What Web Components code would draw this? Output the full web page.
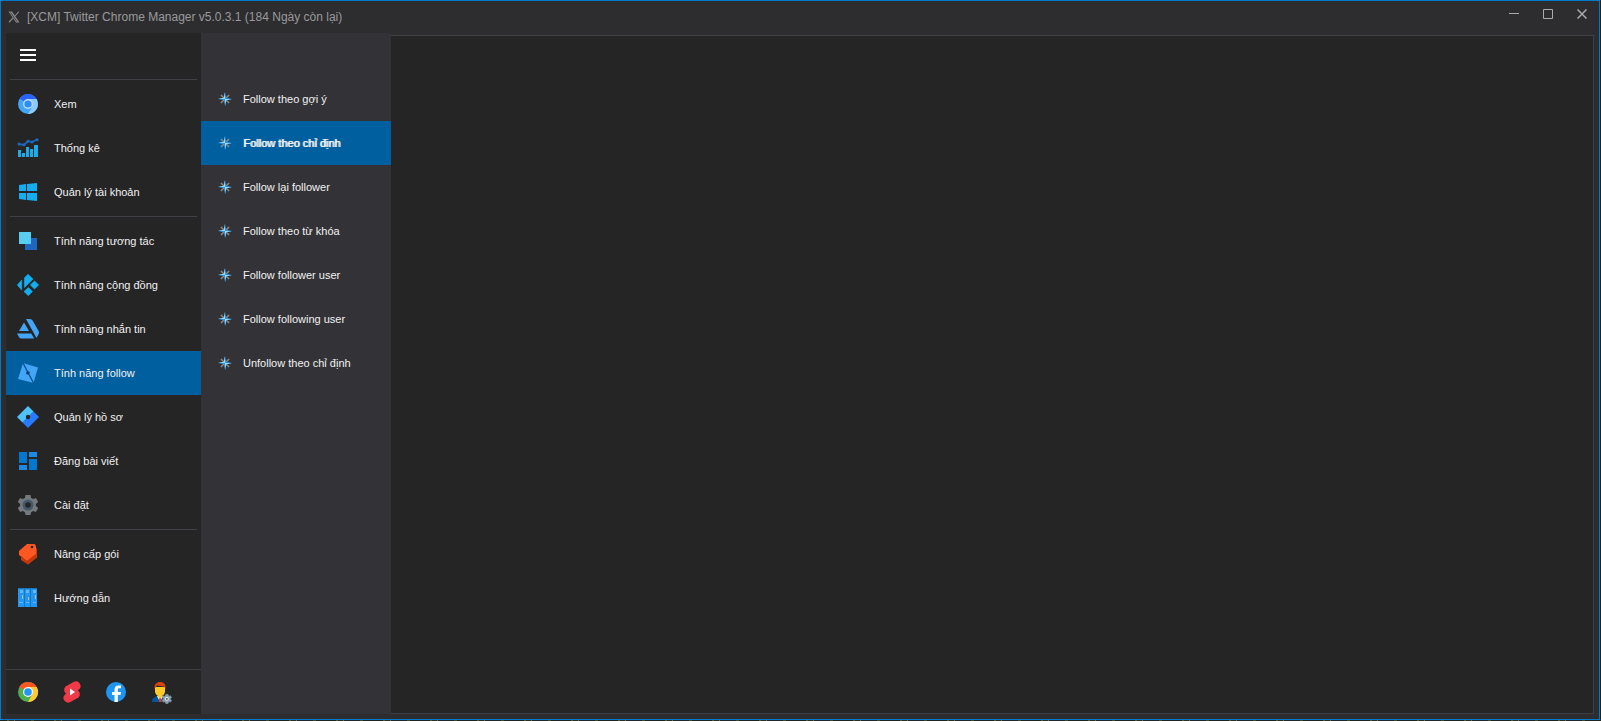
<!DOCTYPE html>
<html lang="vi">
<head>
<meta charset="utf-8">
<title>[XCM] Twitter Chrome Manager</title>
<style>
  :root {
    --accent: #007acc;
    --active: #005f9f;
    --frame: #2d2d30;
    --surface: #252526;
    --submenu: #333337;
    --line: #3f3f46;
  }
  body {
    margin: 0;
    font-family: "Liberation Sans", Arial, sans-serif;
    font-size: 11px;
    line-height: 16px;
    color: #f1f1f1;
    background: #20241d repeating-linear-gradient(90deg, #1c2420 0 7px, #4d5636 7px 9px, #283026 9px 14px, #66684f 14px 15px, #20282c 15px 31px, #3c4a2c 31px 34px, #1d2422 34px 47px);
  }
</style>
</head>
<body>

<app-window>
  <title-bar slot="title">[XCM] Twitter Chrome Manager v5.0.3.1 (184 Ngày còn lại)</title-bar>

  <side-menu slot="side">
    <menu-item icon="chromium">Xem</menu-item>
    <menu-item icon="stats">Thống kê</menu-item>
    <menu-item icon="windows">Quản lý tài khoản</menu-item>
    <menu-line></menu-line>
    <menu-item icon="squares">Tính năng tương tác</menu-item>
    <menu-item icon="kodi">Tính năng cộng đồng</menu-item>
    <menu-item icon="artstation">Tính năng nhắn tin</menu-item>
    <menu-item icon="follow" active>Tính năng follow</menu-item>
    <menu-item icon="tagmanager">Quản lý hồ sơ</menu-item>
    <menu-item icon="dashboard">Đăng bài viết</menu-item>
    <menu-item icon="gear">Cài đặt</menu-item>
    <menu-line></menu-line>
    <menu-item icon="pricetag">Nâng cấp gói</menu-item>
    <menu-item icon="lockers">Hướng dẫn</menu-item>
    <icon-button slot="footer" icon="chrome" label="Chrome"></icon-button>
    <icon-button slot="footer" icon="shorts" label="YouTube Shorts"></icon-button>
    <icon-button slot="footer" icon="facebook" label="Facebook"></icon-button>
    <icon-button slot="footer" icon="admin" label="Admin"></icon-button>
  </side-menu>

  <sub-menu slot="sub">
    <menu-item small icon="star">Follow theo gợi ý</menu-item>
    <menu-item small icon="star" active>Follow theo chỉ định</menu-item>
    <menu-item small icon="star">Follow lại follower</menu-item>
    <menu-item small icon="star">Follow theo từ khóa</menu-item>
    <menu-item small icon="star">Follow follower user</menu-item>
    <menu-item small icon="star">Follow following user</menu-item>
    <menu-item small icon="star">Unfollow theo chỉ định</menu-item>
  </sub-menu>
</app-window>

<script>
const GEAR = 'M9.500 2h5l.6 3 1.900 1.100 2.900-1 2.300 4-2.300 2v2l2.300 2-2.300 4-2.900-1-1.900 1.100-.6 2.800h-5l-.6-2.800L7 18.100l-2.900 1-2.300-4 2.300-2v-2l-2.300-2 2.300-4 2.900 1L8.900 5z';

// all icons share a 24x24 viewBox
const ICONS = {
  menu: '<path fill="#fff" d="M4 6h16v2H4zM4 11h16v2H4zM4 16h16v2H4z"/>',
  chromium: `
    <circle cx="12" cy="12" r="10" fill="#42a5f5"/>
    <path fill="#2962ff" d="M12 12 3.600 6.600A10 10 0 0 1 20.600 7H12l-4 7z"/>
    <path fill="#90caf9" d="M12 7h8.600A10 10 0 0 1 12 22l4.500-7.500z"/>
    <circle cx="12" cy="12" r="5" fill="#bbdefb"/>
    <circle cx="12" cy="12" r="3.600" fill="#2f8cf5"/>`,
  stats: `
    <path fill="#1caae8" d="M2 14h3v7H2zM6 17h3v4H6zM10 11h3v10h-3zM14 13h3v8h-3zM18 9h4v12h-4z"/>
    <path fill="none" stroke="#1565c0" stroke-width="1.800" d="M2.500 8 8 9l4-4 4 1 5-2.500"/>
    <g fill="#1b6bbd"><circle cx="3" cy="8" r="1.500"/><circle cx="8" cy="8.800" r="1.500"/><circle cx="12" cy="5.200" r="1.500"/><circle cx="16" cy="6" r="1.500"/><circle cx="21" cy="3.800" r="1.500"/></g>`,
  windows: '<path fill="#12aeef" d="M3 5l7-1v7H3zM11 4l10-1v8H11zM3 13h7v7l-7-1zM11 13h10v8l-10-1z"/>',
  squares: '<path fill="#1f66c1" d="M9 9h12v12H9z"/><path fill="#58cdf0" d="M3 3h12v12H3z"/>',
  kodi: `
    <g fill="#12aeef" stroke="#12aeef" stroke-width=".6" stroke-linejoin="round">
      <path d="M12 1.300l5 4.700-8.500 8.500V4.800z"/>
      <path d="M5.700 7v10L1.300 12z"/>
      <path d="M18.500 8l4.200 4-4.200 4-4.200-4z"/>
      <path d="M12.300 14.500l4.200 4-4.200 4.200L8 18.500z"/>
    </g>`,
  artstation: `
    <g fill="#42a5f5">
      <path d="M8 5.500 13 14H3z"/>
      <path d="M1 16.500h14.200l3 5H5.500a3 3 0 0 1-2.600-1.500z"/>
      <path d="M10 2h4a3 3 0 0 1 2.600 1.500l6 10.500a3 3 0 0 1 0 3.200L20.500 21z"/>
    </g>`,
  follow: `
    <path fill="#42a5f5" d="M7 2 22 6.500 17.500 22 2 18z"/>
    <path stroke="#0a4f88" stroke-width="1.300" d="M7 2l10.500 20"/>
    <path fill="#073f78" d="M10.800 10l3 .8-.8 3-3-.8z"/>`,
  tagmanager: `
    <path fill="#2979ff" d="M12 12l5.500-5.500L23 12 12 23l-5.500-5.500z"/>
    <path fill="#4fc3f7" d="M12 1l5.500 5.500-11 11L1 12z"/>
    <circle cx="12" cy="12" r="2.200" fill="#252526"/>`,
  dashboard: `
    <path fill="#0078d0" d="M3 3h8v11H3zM13 10h8v11h-8z"/>
    <path fill="#1e88e5" d="M13 3h8v5h-8zM3 16h8v5H3z"/>`,
  gear: `
    <path fill="#73797c" d="${GEAR}"/>
    <circle cx="12" cy="12" r="5.500" fill="#45586a"/>
    <circle cx="12" cy="12" r="2.800" fill="#252526"/>`,
  pricetag: `
    <path fill="#cf3a0a" d="M5 14 21 6v9.500L12 22.500 5 18z"/>
    <path fill="#ff5722" d="M11 2h7.500L20 4v8l-9 7-8-6V9z"/>
    <path fill="#bf360c" d="M20 12v3l-9 6-6-5.500V14l6 5z"/>
    <circle cx="16" cy="5" r="1.300" fill="#252526"/>`,
  lockers: `
    <path fill="#1976b8" d="M2 2h19v19H2z"/>
    <path fill="#2196f3" d="M2 3h6v18H2zM9 3h5v18H9zM15 3h6v18h-6z"/>
    <path fill="#64b5f6" d="M4 4h3v3H4zM10 4h3v3h-3zM17 4h3v3h-3zM3 16h4v1H3zM10 16h3v1h-3zM17 16h3v1h-3z"/>
    <path fill="#b0bec5" d="M6 9h1v4H6zM12 11h1v3h-1zM19 9h1v4h-1z"/>`,
  chrome: `
    <circle cx="12" cy="12" r="10" fill="#4caf50"/>
    <path fill="#ffc936" d="M12 7h8.700A10 10 0 0 1 12 22l4.300-7.500z"/>
    <path fill="#ff5722" d="M12 12 3.300 7A10 10 0 0 1 20.700 7H12l-4 6z"/>
    <circle cx="12" cy="12" r="5" fill="#fff"/>
    <circle cx="12" cy="12" r="3.800" fill="#2196f3"/>`,
  shorts: `
    <path fill="#f03a47" d="M5.500 6.500 14 1.700a4.700 4.700 0 0 1 5.200 7.600l-1.400 1a4.700 4.700 0 0 1 .7 7.200L10 22.300a4.700 4.700 0 0 1-5.200-7.600l1.400-1a4.700 4.700 0 0 1-.7-7.200z"/>
    <path fill="#fff" d="M10 8.500l5 3.500-5 3.500z"/>`,
  facebook: `
    <circle cx="12" cy="12" r="10" fill="#1e96f0"/>
    <path fill="#fff" d="M10.500 22v-7H8v-3h2.500v-2.200C10.500 7 12 5.500 14.400 5.500H17v2.700h-1.500c-1.300 0-1.700.6-1.700 1.600V12H17l-.5 3h-2.700v7z"/>`,
  admin: `
    <path fill="#01579b" d="M4 22c0-4.500 3-5.500 6-6h4c3 .5 5 2 5 6z"/>
    <path fill="#fff" d="M9 16l3 6 3-6z"/>
    <path fill="#dd3b2c" d="M11.300 17h1.600l.6 5h-2.700z"/>
    <path fill="#ffca28" d="M7 7h10v4c0 2-1 4-3 5v1l-2 1.500L10 17v-1c-2-1-3-3-3-5z"/>
    <path fill="#d8430f" d="M6.500 9C6 4 9 2 12 2c4 0 6 2.500 5.500 7L16 6.500l-7-1z"/>
    <g transform="translate(13.500 13.500) scale(.45)"><path fill="#90a4ae" stroke="#78909c" stroke-width="2" d="${GEAR}"/><circle cx="12" cy="12" r="4" fill="#eceff1"/><circle cx="12" cy="12" r="2" fill="#37474f"/></g>`,
  star: `
    <path stroke="#94887f" stroke-width="2.500" d="M5 5l14 14M19 5 5 19"/>
    <path fill="#2196f3" d="M12 0l2 10 10 2-10 2-2 10-2-10-10-2 10-2z"/>
    <path fill="#a6d8fa" d="M12 0v12H0l10-2zM12 24V12h12l-10 2z"/>`,
  logo: `
    <path fill="#8a8a8c" d="M1 1h7l15 22h-7z"/>
    <path stroke="#2d2d30" stroke-width="1.500" d="M5 3l13 18"/>
    <path stroke="#8a8a8c" stroke-width="2.200" d="M21.500 1.500l-8 9M10 14l-8 8.500"/>`,
};

const drawIcon = name => `<svg viewBox="0 0 24 24" aria-hidden="true">${ICONS[name]}</svg>`;

class AppWindow extends HTMLElement {
  constructor() {
    super();
    this.attachShadow({ mode: 'open' }).innerHTML = `
      <style>
        :host {
          display: flex;
          flex-direction: column;
          box-sizing: border-box;
          min-height: calc(100vh - 1px);
          margin: 0 1px 0 0;
          border: 1px solid var(--accent);
          background: var(--frame);
        }
        .body {
          flex: 1;
          display: grid;
          grid-template-columns: 195px 190px 1fr;
          padding: 0 5px 5px;
        }
        main {
          margin-top: 2px;
          border: 1px solid var(--line);
          border-left: 0;
          background: var(--surface);
        }
      </style>
      <slot name="title"></slot>
      <div class="body">
        <slot name="side"></slot>
        <slot name="sub"></slot>
        <main><slot></slot></main>
      </div>
    `;
  }
}

class TitleBar extends HTMLElement {
  constructor() {
    super();
    this.attachShadow({ mode: 'open' }).innerHTML = `
      <style>
        :host {
          display: flex;
          align-items: center;
          height: 32px;
          padding-left: 7px;
          font-size: 12px;
          color: #999;
        }
        .logo {
          width: 12px;
          height: 12px;
          margin-right: 7px;
        }
        .logo svg { display: block; }
        h1 {
          flex: 1;
          margin: 0;
          font-size: inherit;
          font-weight: normal;
        }
        button {
          align-self: flex-start;
          width: 34px;
          height: 26px;
          padding: 0;
          border: 0;
          background: none;
          color: #aaa;
        }
        button svg {
          display: block;
          width: 10px;
          height: 10px;
          margin: auto;
          fill: none;
          stroke: currentColor;
        }
      </style>
      <span class="logo">${drawIcon('logo')}</span>
      <h1><slot></slot></h1>
      <button aria-label="Minimize"><svg viewBox="0 0 10 10"><path d="M0 4.500h10"/></svg></button>
      <button aria-label="Maximize"><svg viewBox="0 0 10 10"><path d="M.5.5h9v9h-9z"/></svg></button>
      <button aria-label="Close"><svg viewBox="0 0 10 10"><path stroke-width="1.500" d="M.5.5l9 9M9.500.5l-9 9"/></svg></button>
    `;
  }
}

class SideMenu extends HTMLElement {
  constructor() {
    super();
    this.attachShadow({ mode: 'open' }).innerHTML = `
      <style>
        :host {
          display: flex;
          flex-direction: column;
          background: var(--surface);
        }
        nav { flex: 1; }
        footer {
          display: flex;
          border-top: 1px solid var(--line);
        }
      </style>
      <icon-button icon="menu" label="Menu"></icon-button>
      <menu-line></menu-line>
      <nav><slot></slot></nav>
      <footer><slot name="footer"></slot></footer>
    `;
  }
}

class SubMenu extends HTMLElement {
  constructor() {
    super();
    this.attachShadow({ mode: 'open' }).innerHTML = `
      <style>
        :host {
          display: block;
          padding-top: 44px;
          background: var(--submenu);
        }
      </style>
      <nav><slot></slot></nav>
    `;
  }
}

class MenuItem extends HTMLElement {
  constructor() {
    super();
    this.attachShadow({ mode: 'open' });
  }

  connectedCallback() {
    this.shadowRoot.innerHTML = `
      <style>
        :host { display: block; }
        a {
          display: flex;
          align-items: center;
          gap: 14px;
          height: 44px;
          padding-left: 10px;
          color: inherit;
          text-decoration: none;
        }
        svg {
          width: 24px;
          height: 24px;
        }
        :host([active]) a { background: var(--active); }
        :host([small]) a {
          gap: 11px;
          padding-left: 17px;
        }
        :host([small]) svg {
          width: 14px;
          height: 14px;
        }
        /* heavier text that keeps the regular width */
        :host([small][active]) a { text-shadow: 1px 0 currentColor; }
      </style>
      <a href="#">${drawIcon(this.getAttribute('icon'))}<span><slot></slot></span></a>
    `;
  }
}

class MenuLine extends HTMLElement {
  constructor() {
    super();
    this.attachShadow({ mode: 'open' }).innerHTML = `
      <style>
        :host {
          display: block;
          height: 1px;
          margin: 2px 4px;
          background: var(--line);
        }
      </style>
    `;
  }
}

class IconButton extends HTMLElement {
  constructor() {
    super();
    this.attachShadow({ mode: 'open' });
  }

  connectedCallback() {
    this.shadowRoot.innerHTML = `
      <style>
        :host { display: block; }
        button {
          display: flex;
          align-items: center;
          justify-content: center;
          width: 44px;
          height: 44px;
          padding: 0;
          border: 0;
          background: none;
        }
        svg {
          width: 24px;
          height: 24px;
        }
      </style>
      <button aria-label="${this.getAttribute('label')}">${drawIcon(this.getAttribute('icon'))}</button>
    `;
  }
}

customElements.define('app-window', AppWindow);
customElements.define('title-bar', TitleBar);
customElements.define('side-menu', SideMenu);
customElements.define('sub-menu', SubMenu);
customElements.define('menu-item', MenuItem);
customElements.define('menu-line', MenuLine);
customElements.define('icon-button', IconButton);
</script>
</body>
</html>
